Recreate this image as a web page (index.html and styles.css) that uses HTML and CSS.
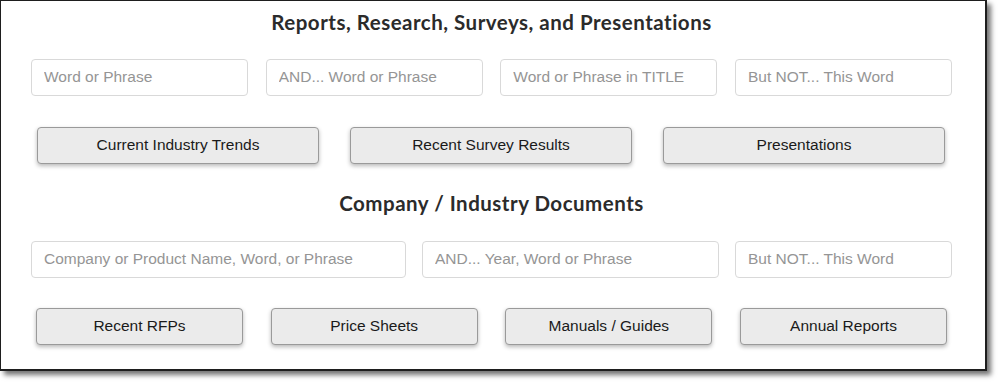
FILE: index.html
```html
<!DOCTYPE html>
<html>
<head>
<meta charset="utf-8">
<link rel="stylesheet" href="styles.css">
</head>
<body>
<div class="frame">
  <h2 class="title t1">Reports, Research, Surveys, and Presentations</h2>
  <div class="inputs row1">
    <input class="field w217" placeholder="Word or Phrase">
    <input class="field w217" placeholder="AND... Word or Phrase">
    <input class="field w217" placeholder="Word or Phrase in TITLE">
    <input class="field w217" placeholder="But NOT... This Word">
  </div>
  <div class="buttons b3">
    <button class="btn w282">Current Industry Trends</button>
    <button class="btn w282">Recent Survey Results</button>
    <button class="btn w282">Presentations</button>
  </div>
  <h2 class="title t2">Company / Industry Documents</h2>
  <div class="inputs row2">
    <input class="field w375" placeholder="Company or Product Name, Word, or Phrase">
    <input class="field w297" placeholder="AND... Year, Word or Phrase">
    <input class="field w217" placeholder="But NOT... This Word">
  </div>
  <div class="buttons b4">
    <button class="btn w207">Recent RFPs</button>
    <button class="btn w207">Price Sheets</button>
    <button class="btn w207">Manuals / Guides</button>
    <button class="btn w207">Annual Reports</button>
  </div>
</div>
</body>
</html>
```
FILE: styles.css
```css
html, body {
  margin: 0;
  padding: 0;
  background: #fff;
}
body {
  min-height: 383px;
}
.frame {
  box-sizing: border-box;
  width: 987px;
  height: 371px;
  border: 1px solid #1e1e1e;
  border-right-width: 2px;
  border-bottom-width: 2px;
  background: #fff;
  box-shadow: 4px 4px 5px rgba(0,0,0,0.55);
  padding: 0 33px 0 30px;
  font-family: "Liberation Sans", Arial, sans-serif;
}
.title {
  margin: 0;
  text-align: center;
  font-family: Lato, "Open Sans", sans-serif;
  font-weight: 700;
  font-size: 20.5px;
  letter-spacing: 0.5px;
  line-height: 24px;
  color: #2b2b2b;
}
.t1 { padding-top: 9px; }
.t2 { margin-top: 27px; }
.inputs {
  display: flex;
  justify-content: space-between;
  margin-top: 25px;
}
.row2 { margin-top: 26px; }
.field {
  box-sizing: border-box;
  height: 37px;
  border: 1px solid #d9d9d9;
  border-radius: 4px;
  padding: 0 12px 1px;
  font-family: "Liberation Sans", Arial, sans-serif;
  font-size: 15.5px;
  color: #333;
  background: #fff;
  outline: none;
}
.field::placeholder { color: #959595; }
.w217 { width: 217px; }
.w375 { width: 375px; }
.w297 { width: 297px; }
.buttons {
  display: flex;
  justify-content: space-between;
  margin-top: 31px;
}
.b3 { padding: 0 7px 0 6px; }
.b4 { padding: 0 5px 0 5px; margin-top: 30px; }
.btn {
  box-sizing: border-box;
  height: 37px;
  border: 1px solid #9a9a9a;
  border-radius: 4px;
  background: #ebebeb;
  box-shadow: 0 2px 4px rgba(0,0,0,0.28);
  font-family: "Liberation Sans", Arial, sans-serif;
  font-size: 15.5px;
  color: #1a1a1a;
  padding: 0 0 2px;
}
.w282 { width: 282px; }
.w207 { width: 207px; }
```
